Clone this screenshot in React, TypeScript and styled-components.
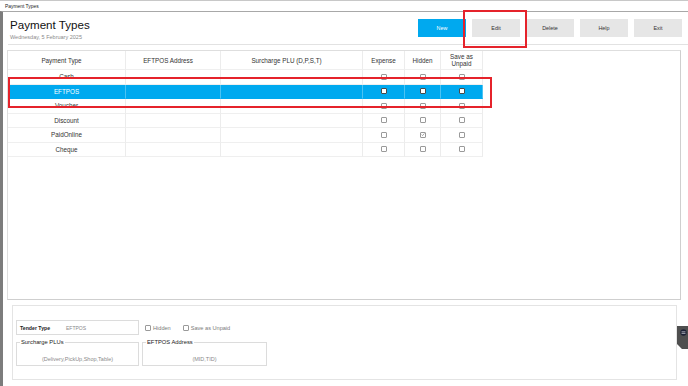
import React from 'react';
import styled, { createGlobalStyle } from 'styled-components';

const GlobalStyle = createGlobalStyle`
  html, body {
    margin: 0;
    padding: 0;
    background: #ffffff;
    font-family: "Liberation Sans", Arial, sans-serif;
    overflow: hidden;
  }
  * {
    box-sizing: border-box;
  }
`;

const Window = styled.div`
  position: relative;
  width: 688px;
  height: 386px;
  display: flex;
  flex-direction: column;
  background: #ffffff;
  border-top: 1px solid #c8c8c8;
`;

const TitleBar = styled.div`
  height: 10px;
  padding: 3px 0 0 5px;
  font-size: 4.9px;
  color: #222;
`;

const Frame = styled.div`
  flex: 1;
  display: flex;
  border-left: 3px solid #7c7c7c;
  border-top: 1px solid #a8a8a8;
`;

const Content = styled.div`
  flex: 1;
  display: flex;
  flex-direction: column;
`;

const Header = styled.div`
  height: 33px;
  margin-left: 5px;
  display: flex;
  justify-content: space-between;
  border-bottom: 1px solid #e2e2e2;
`;

const TitleBlock = styled.div`
  padding: 6px 0 0 2px;
  display: flex;
  flex-direction: column;
`;

const Title = styled.div`
  font-size: 11.6px;
  line-height: 14px;
  color: #111;
`;

const DateLine = styled.div`
  margin-top: 2px;
  font-size: 5.5px;
  line-height: 7px;
  color: #8a8a8a;
`;

const Toolbar = styled.div`
  display: flex;
  gap: 6px;
  padding: 7px 6px 0 0;
  align-items: flex-start;
`;

const Button = styled.div<{ $primary?: boolean }>`
  width: 48px;
  height: 18px;
  display: flex;
  align-items: center;
  justify-content: center;
  font-size: 5.4px;
  background: ${p => (p.$primary ? '#00a9ef' : '#e6e6e6')};
  color: ${p => (p.$primary ? '#ffffff' : '#333')};
`;

const TableBox = styled.div`
  margin: 5px 7px 0 4px;
  height: 250px;
  border: 1px solid #dedede;
  border-right-color: #cfcfcf;
  border-bottom-color: #cfcfcf;
  display: flex;
  flex-direction: column;
  align-items: flex-start;
`;

const Row = styled.div<{ $head?: boolean; $selected?: boolean }>`
  display: grid;
  width: 475px;
  grid-template-columns: 118px 95px 142px 42px 36px 42px;
  height: ${p => (p.$head ? '19px' : '14.5px')};
  background: ${p => (p.$selected ? '#00a9ef' : 'transparent')};
  color: ${p => (p.$selected ? '#ffffff' : '#333')};
  font-size: 6.3px;
`;

const Cell = styled.div<{ $pad?: number; $selected?: boolean }>`
  display: flex;
  align-items: center;
  justify-content: center;
  text-align: center;
  line-height: 7px;
  padding-right: ${p => p.$pad || 0}px;
  border-right: 1px solid ${p => (p.$selected ? '#4cc3f3' : '#ececec')};
  border-bottom: 1px solid ${p => (p.$selected ? '#00a9ef' : '#efefef')};
`;

const Box = styled.div<{ $dark?: boolean }>`
  width: 6px;
  height: 6px;
  border: 1px solid ${p => (p.$dark ? '#4a4a4a' : '#9a9a9a')};
  border-radius: 1px;
  background: #ffffff;
  display: flex;
  align-items: center;
  justify-content: center;
`;

const Check = ({ checked, dark }: { checked?: boolean; dark?: boolean }) => (
  <Box $dark={dark}>
    {checked && (
      <svg width="5" height="5" viewBox="0 0 10 10">
        <path d="M1.5 5.2 L4 7.6 L8.6 2.2" fill="none" stroke="#777" strokeWidth="1.6" />
      </svg>
    )}
  </Box>
);

const DetailPanel = styled.div`
  margin: 5px 0 0 9px;
  width: 665px;
  height: 75px;
  border: 1px solid #e4e4e4;
  padding: 14px 0 0 3px;
  display: flex;
  flex-direction: column;
  gap: 4px;
`;

const DetailRow = styled.div<{ $gap?: number }>`
  display: flex;
  align-items: center;
  gap: ${p => p.$gap ?? 6}px;
`;

const TenderField = styled.div`
  width: 123px;
  height: 15px;
  border: 1px solid #dcdcdc;
  display: flex;
  align-items: center;
  padding-left: 3px;
`;

const FieldLabel = styled.span`
  width: 46px;
  font-size: 5.2px;
  color: #222;
  font-weight: 600;
`;

const FieldValue = styled.span`
  font-size: 5px;
  color: #8a8a8a;
`;

const Option = styled.div<{ $gap?: number }>`
  display: flex;
  align-items: center;
  gap: 2px;
  margin-right: ${p => p.$gap || 0}px;
  font-size: 5.6px;
  color: #7a7a7a;
`;

const Group = styled.fieldset<{ $w: number }>`
  margin: 0;
  width: ${p => p.$w}px;
  height: 27px;
  padding: 0 0 0 3px;
  border: 1px solid #dcdcdc;
  display: flex;
  align-items: flex-end;
  justify-content: center;
  min-width: 0;
`;

const Legend = styled.legend`
  font-size: 5.8px;
  color: #222;
  padding: 0 1px;
`;

const GroupHint = styled.div`
  font-size: 5.5px;
  color: #8a8a8a;
  padding-bottom: 3px;
  width: 100%;
  text-align: center;
  margin-left: -3px;
`;

const Highlight = styled.div<{ $x: number; $y: number; $w: number; $h: number }>`
  position: absolute;
  left: ${p => p.$x}px;
  top: ${p => p.$y}px;
  width: ${p => p.$w}px;
  height: ${p => p.$h}px;
  border: 2px solid #e5232b;
  pointer-events: none;
`;

const SideTab = styled.div`
  position: absolute;
  right: 0;
  top: 325px;
  width: 11px;
  height: 23px;
  background: #4f4f4f;
  clip-path: polygon(0 0, 100% 0, 100% 100%, 45% 100%, 0 78%);
  display: flex;
  justify-content: flex-end;
  padding: 3px 1px 0 0;
`;

const rows = [
  { name: 'Cash', hidden: false },
  { name: 'EFTPOS', hidden: false, selected: true },
  { name: 'Voucher', hidden: false },
  { name: 'Discount', hidden: false },
  { name: 'PaidOnline', hidden: true },
  { name: 'Cheque', hidden: false },
];

export default function App() {
  return (
    <Window>
      <GlobalStyle />
      <TitleBar>Payment Types</TitleBar>
      <Frame>
        <Content>
          <Header>
            <TitleBlock>
              <Title>Payment Types</Title>
              <DateLine>Wednesday, 5 February 2025</DateLine>
            </TitleBlock>
            <Toolbar>
              <Button $primary>New</Button>
              <Button>Edit</Button>
              <Button>Delete</Button>
              <Button>Help</Button>
              <Button>Exit</Button>
            </Toolbar>
          </Header>

          <TableBox>
            <Row $head>
              <Cell $pad={10}>Payment Type</Cell>
              <Cell $pad={10}>EFTPOS Address</Cell>
              <Cell $pad={10}>Surcharge PLU (D,P,S,T)</Cell>
              <Cell>Expense</Cell>
              <Cell>Hidden</Cell>
              <Cell>Save as<br />Unpaid</Cell>
            </Row>
            {rows.map(r => (
              <Row key={r.name} $selected={r.selected}>
                <Cell $selected={r.selected}>{r.name}</Cell>
                <Cell $selected={r.selected} />
                <Cell $selected={r.selected} />
                <Cell $selected={r.selected}><Check dark={r.selected} /></Cell>
                <Cell $selected={r.selected}><Check dark={r.selected} checked={r.hidden} /></Cell>
                <Cell $selected={r.selected}><Check dark={r.selected} /></Cell>
              </Row>
            ))}
          </TableBox>

          <DetailPanel>
            <DetailRow>
              <TenderField>
                <FieldLabel>Tender Type</FieldLabel>
                <FieldValue>EFTPOS</FieldValue>
              </TenderField>
              <Option $gap={6}><Check />Hidden</Option>
              <Option><Check />Save as Unpaid</Option>
            </DetailRow>
            <DetailRow $gap={3}>
              <Group $w={123}>
                <Legend>Surcharge PLUs</Legend>
                <GroupHint>(Delivery,PickUp,Shop,Table)</GroupHint>
              </Group>
              <Group $w={125}>
                <Legend>EFTPOS Address</Legend>
                <GroupHint>(MID,TID)</GroupHint>
              </Group>
            </DetailRow>
          </DetailPanel>
        </Content>
      </Frame>

      <Highlight $x={463} $y={9} $w={64} $h={38} />
      <Highlight $x={8} $y={76} $w={484} $h={31} />

      <SideTab>
        <svg width="7" height="7" viewBox="0 0 10 10">
          <circle cx="5" cy="5" r="4.5" fill="#1d2236" />
          <rect x="2.2" y="3.6" width="5.6" height="1" fill="#d8d8e0" />
          <rect x="2.2" y="5.6" width="5.6" height="1" fill="#d8d8e0" />
        </svg>
      </SideTab>
    </Window>
  );
}
